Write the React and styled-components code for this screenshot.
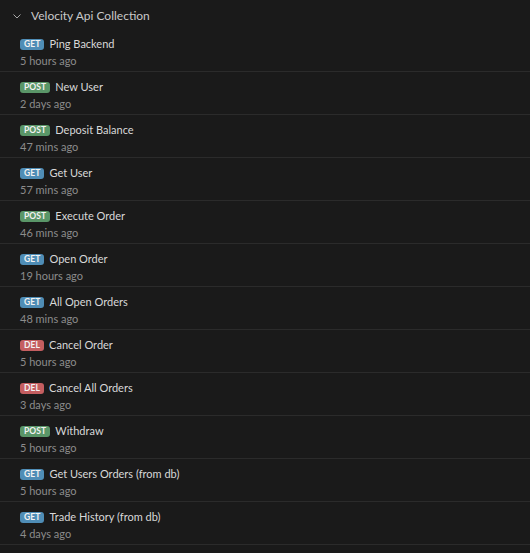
import React from 'react';
import styled, { createGlobalStyle } from 'styled-components';

const GlobalStyle = createGlobalStyle`
  html, body {
    margin: 0;
    padding: 0;
    background: #1a1a1a;
  }
  body {
    font-family: Lato, "Noto Sans", sans-serif;
    -webkit-font-smoothing: antialiased;
  }
`;

const Panel = styled.div`
  width: 530px;
  min-height: 553px;
  background: #1a1a1a;
`;

const Header = styled.div`
  display: flex;
  align-items: center;
  height: 30px;
  padding-left: 12px;
  gap: 9px;
  color: #c9c9c9;
  font-size: 12px;
  margin-bottom: -1px;
`;

const Chevron = styled.svg`
  width: 10px;
  height: 10px;
  flex-shrink: 0;
  margin-top: 1px;
`;

const Row = styled.div`
  display: flex;
  flex-direction: column;
  gap: 3px;
  height: 43px;
  box-sizing: border-box;
  padding: 8px 0 0 20px;
  border-bottom: 1px solid #2b2b2b;
`;

const TitleLine = styled.div`
  display: flex;
  align-items: center;
  gap: 5px;
  height: 14px;
`;

const badgeColors = {
  GET: '#4f8db6',
  POST: '#5a9668',
  DEL: '#c45e60',
};

const Badge = styled.span`
  display: inline-flex;
  align-items: center;
  justify-content: center;
  height: 11px;
  padding: 0 4px;
  border-radius: 3px;
  background: ${(p) => badgeColors[p.$method]};
  color: #f2f2f2;
  font-size: 8.5px;
  font-weight: 700;
  letter-spacing: 0.1px;
  line-height: 1;
`;

const Name = styled.span`
  color: #d8d8d8;
  font-size: 11px;
  line-height: 14px;
`;

const Time = styled.div`
  color: #8c8c8c;
  font-size: 11px;
  line-height: 14px;
`;

const requests = [
  { method: 'GET', name: 'Ping Backend', time: '5 hours ago' },
  { method: 'POST', name: 'New User', time: '2 days ago' },
  { method: 'POST', name: 'Deposit Balance', time: '47 mins ago' },
  { method: 'GET', name: 'Get User', time: '57 mins ago' },
  { method: 'POST', name: 'Execute Order', time: '46 mins ago' },
  { method: 'GET', name: 'Open Order', time: '19 hours ago' },
  { method: 'GET', name: 'All Open Orders', time: '48 mins ago' },
  { method: 'DEL', name: 'Cancel Order', time: '5 hours ago' },
  { method: 'DEL', name: 'Cancel All Orders', time: '3 days ago' },
  { method: 'POST', name: 'Withdraw', time: '5 hours ago' },
  { method: 'GET', name: 'Get Users Orders (from db)', time: '5 hours ago' },
  { method: 'GET', name: 'Trade History (from db)', time: '4 days ago' },
];

export default function App() {
  return (
    <>
      <GlobalStyle />
      <Panel>
        <Header>
          <Chevron viewBox="0 0 10 10">
            <path d="M1.5 3.5 L5 7 L8.5 3.5" fill="none" stroke="#a8a8a8" strokeWidth="1" />
          </Chevron>
          Velocity Api Collection
        </Header>
        {requests.map((r, i) => (
          <Row key={i}>
            <TitleLine>
              <Badge $method={r.method}>{r.method}</Badge>
              <Name>{r.name}</Name>
            </TitleLine>
            <Time>{r.time}</Time>
          </Row>
        ))}
      </Panel>
    </>
  );
}
